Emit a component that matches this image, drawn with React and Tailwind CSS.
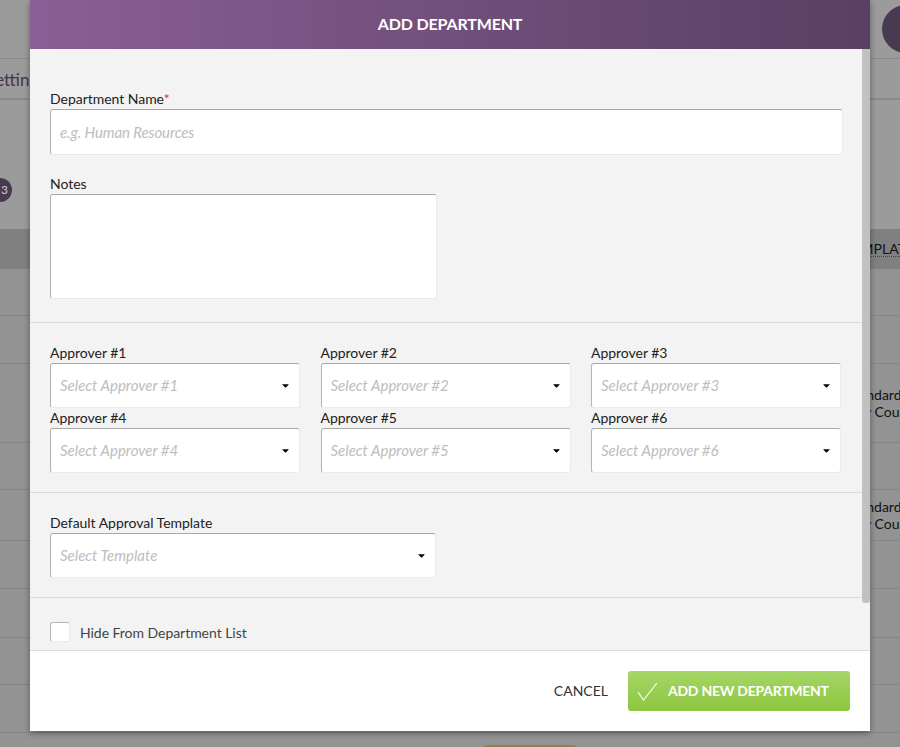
import { FaCaretDown } from "react-icons/fa";

const approvers = [1, 2, 3, 4, 5, 6];

const rowHeights = [47, 48, 79, 47, 51, 48, 49, 47, 48];

function Backdrop() {
  return (
    <div className="h-[747px] overflow-hidden bg-[#9b9b9b] font-['Lato',sans-serif]">
      <div className="flex h-[59px] justify-end border-b border-[#8a8a8a] pt-[5px]">
        <div className="mr-[-30px] h-12 w-12 rounded-full bg-[#493951]" />
      </div>
      <div className="flex h-[41px] items-center border-b-2 border-[#8a8a8a] pt-[2px] text-[17px] text-[#46344f]">
        <span className="ml-[-14px]">Settings</span>
      </div>
      <div className="flex h-[129px] items-center pt-[50px]">
        <div className="ml-[-12px] flex h-6 w-6 items-center justify-end rounded-full bg-[#493951] pr-1 text-xs text-[#ccc]">
          3
        </div>
      </div>
      <div className="flex h-10 items-center justify-end bg-[#808080] text-sm text-[#111]">
        <span className="mr-[-14px] border-b border-dotted border-[#4a3a5a] leading-[15px]">
          TEMPLATE
        </span>
      </div>
      <div className="bg-[#939393]">
        {rowHeights.map((h, i) => (
          <div
            key={i}
            className={
              i === 2 || i === 4
                ? "flex h-[var(--h)] flex-col items-start justify-center border-b border-[#858585] pl-[847px] text-sm leading-[17px] text-[#111]"
                : "h-[var(--h)] border-b border-[#858585]"
            }
            style={{ "--h": h + "px" }}
          >
            {(i === 2 || i === 4) && (
              <>
                <span className="whitespace-nowrap">Standard</span>
                <span className="whitespace-nowrap">Any County</span>
              </>
            )}
          </div>
        ))}
        <div className="mt-3 ml-[480px] h-4 w-[100px] rounded-t-lg bg-[#8f8150]" />
      </div>
    </div>
  );
}

function Label({ children }) {
  return (
    <label className="block h-5 text-sm leading-5 tracking-[-0.03px] text-[#222]">
      {children}
    </label>
  );
}

function Select({ placeholder }) {
  return (
    <div className="flex h-[45px] items-center justify-between rounded-[3px] border border-[#eaeaea] border-t-[#a8a8a8] border-l-[#b5b5b5] bg-white pr-2 pl-[9px]">
      <span className="text-[15px] italic text-[#bdbdbd]">{placeholder}</span>
      <FaCaretDown className="text-[11px] text-black" />
    </div>
  );
}

function Modal() {
  return (
    <div className="absolute top-0 left-[30px] flex h-[731px] w-[840px] flex-col rounded-b-[3px] bg-white font-['Lato',sans-serif] shadow-[0_2px_6px_rgba(0,0,0,0.4)]">
      <div className="flex h-[49px] shrink-0 items-center justify-center bg-linear-to-r from-[#8a5f95] to-[#5a3f63] pb-px text-base font-bold tracking-[-0.15px] text-white">
        ADD DEPARTMENT
      </div>
      <div className="relative flex-1 overflow-hidden bg-[#f3f3f3]">
        <div className="px-5 pt-10 pb-[23px]">
          <Label>
            Department Name<span className="text-[#d9363e]">*</span>
          </Label>
          <input
            className="block h-[46px] w-[793px] rounded-[3px] border border-[#eaeaea] border-t-[#a8a8a8] border-l-[#b5b5b5] bg-white px-[9px] pb-px text-[15px] tracking-[-0.1px] outline-none placeholder:text-[#bdbdbd] placeholder:italic"
            placeholder="e.g. Human Resources"
          />
          <div className="mt-[19px]">
            <Label>Notes</Label>
          </div>
          <textarea className="block h-[105px] w-[387px] resize-none rounded-[3px] border border-[#eaeaea] border-t-[#a8a8a8] border-l-[#b5b5b5] bg-white outline-none" />
        </div>
        <div className="border-t border-[#dcdcdc] px-5 pt-5 pb-[19px]">
          <div className="grid w-[791px] grid-cols-3 gap-x-[20.5px]">
            {approvers.map((n) => (
              <div key={n}>
                <Label>Approver #{n}</Label>
                <Select placeholder={"Select Approver #" + n} />
              </div>
            ))}
          </div>
        </div>
        <div className="border-t border-[#dcdcdc] px-5 pt-5 pb-[19px]">
          <Label>Default Approval Template</Label>
          <div className="w-[386px]">
            <Select placeholder="Select Template" />
          </div>
        </div>
        <div className="flex items-start gap-[10px] border-t border-[#dcdcdc] px-5 pt-6">
          <div className="h-5 w-5 rounded-[3px] border border-[#eaeaea] border-t-[#b5b5b5] border-l-[#b5b5b5] bg-white" />
          <span className="pt-px text-sm tracking-[-0.04px] text-[#444]">
            Hide From Department List
          </span>
        </div>
        <div className="absolute top-0 right-0 h-[554px] w-2 rounded-b-[3px] bg-[#c1c1c1]" />
      </div>
      <div className="flex h-[81px] shrink-0 items-center justify-end gap-5 border-t border-[#dcdcdc] bg-white pr-5">
        <button className="text-sm text-[#333]">CANCEL</button>
        <button className="flex h-10 w-[222px] items-center gap-[10px] rounded-[3px] bg-linear-to-b from-[#a6d666] to-[#8dc63f] pl-[9px] text-sm font-bold tracking-[-0.25px] text-white">
          <svg width="21" height="19" viewBox="0 0 21 19" fill="none" stroke="white" strokeWidth="1.1">
            <path d="M1 10 L6.5 18 L20 1" />
          </svg>
          ADD NEW DEPARTMENT
        </button>
      </div>
    </div>
  );
}

export default function App() {
  return (
    <div className="relative h-[747px] w-[900px] overflow-hidden">
      <Backdrop />
      <Modal />
    </div>
  );
}
